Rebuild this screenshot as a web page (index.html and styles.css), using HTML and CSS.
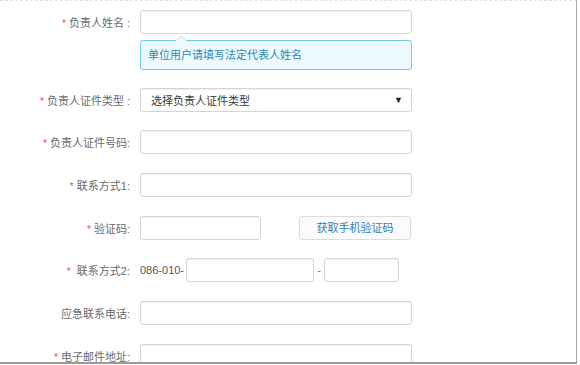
FILE: index.html
```html
<!doctype html>
<html lang="zh-CN">
<head>
	<meta charset="UTF-8" />
	<title>负责人信息</title>
	<link rel="stylesheet" href="styles.css">
</head>
<body>
	<section class="page">
		<form class="form">
			<div class="group">
				<div class="row">
					<label class="label"><i>*</i> 负责人姓名 :</label>
					<input class="ipt" type="text" />
				</div>
				<div class="tip">单位用户请填写法定代表人姓名</div>
			</div>
			<div class="row">
				<label class="label"><i>*</i> 负责人证件类型 :</label>
				<div class="select"><span>选择负责人证件类型</span><b>▼</b></div>
			</div>
			<div class="row">
				<label class="label"><i>*</i> 负责人证件号码:</label>
				<input class="ipt" type="text" />
			</div>
			<div class="row">
				<label class="label"><i>*</i> 联系方式1:</label>
				<input class="ipt" type="text" />
			</div>
			<div class="row">
				<label class="label"><i>*</i> 验证码:</label>
				<input class="ipt ipt-code" type="text" />
				<a href="javascript:;" class="btn">获取手机验证码</a>
			</div>
			<div class="row">
				<label class="label"><i>*</i> &nbsp;联系方式2:</label>
				<span class="pre">086-010-</span>
				<input class="ipt ipt-tel" type="text" />
				<span class="dash">-</span>
				<input class="ipt ipt-ext" type="text" />
			</div>
			<div class="row">
				<label class="label">应急联系电话:</label>
				<input class="ipt" type="text" />
			</div>
			<div class="row">
				<label class="label"><i>*</i> 电子邮件地址:</label>
				<input class="ipt" type="text" />
			</div>
		</form>
	</section>
</body>
</html>
```
FILE: styles.css
```css
body{
	margin: 0;
	font-family: "Liberation Sans", "Noto Sans CJK SC", sans-serif;
	font-size: 11px;
	color: #666;
	background: #fff;
}
.page{
	width: 576px;
	height: 361px;
	border-top: 1px dashed #e2e2e2;
	border-right: 1px solid #a6a6a6;
	border-bottom: 2px solid #9a9a9a;
	overflow: hidden;
}
.form{
	padding-top: 9px;
	display: flex;
	flex-direction: column;
	gap: 18.67px;
}
.group{
	margin-bottom: -1px;
}
.row{
	display: flex;
	align-items: center;
	height: 24px;
}
.label{
	width: 130px;
	margin-right: 10px;
	text-align: right;
	white-space: nowrap;
	color: #6a6a6a;
}
.label i{
	font-style: normal;
	color: #e2506a;
	font-size: 10px;
}
.ipt{
	box-sizing: border-box;
	width: 272px;
	height: 24px;
	margin: 0;
	padding: 0 8px;
	border: 1px solid #d4d4d4;
	border-radius: 3px;
	box-shadow: inset 0 1px 1px rgba(0,0,0,.06);
	font: inherit;
	outline: none;
}
.ipt-code{
	width: 121px;
}
.ipt-tel{
	width: 128px;
}
.ipt-ext{
	width: 75px;
}
.pre{
	width: 46px;
	color: #555;
}
.dash{
	width: 10px;
	text-align: center;
	color: #777;
}
.btn{
	box-sizing: border-box;
	width: 112px;
	height: 24px;
	margin-left: 38px;
	line-height: 22px;
	text-align: center;
	border: 1px solid #dcdcdc;
	border-radius: 3px;
	background: #fbfbfb;
	color: #2f7fb6;
	text-decoration: none;
}
.select{
	box-sizing: border-box;
	width: 272px;
	height: 24px;
	padding: 0 8px 0 10px;
	display: flex;
	align-items: center;
	justify-content: space-between;
	border: 1px solid #d4d4d4;
	border-radius: 3px;
	box-shadow: inset 0 1px 1px rgba(0,0,0,.06);
	color: #3a3a3a;
}
.select b{
	font-weight: normal;
	font-size: 9px;
	color: #222;
}
.tip{
	position: relative;
	box-sizing: border-box;
	width: 272px;
	height: 30px;
	margin: 6px 0 0 140px;
	padding-left: 7px;
	line-height: 28px;
	border: 1px solid #6ccbe6;
	border-radius: 3px;
	background: #ecf9fd;
	color: #2f86b8;
}
.tip:before,
.tip:after{
	content: "";
	position: absolute;
	left: 34px;
	top: -6px;
	border: 6px solid transparent;
	border-top: 0;
	border-bottom-color: #d6ebf1;
}
.tip:after{
	left: 35px;
	top: -4px;
	border-width: 0 5px 5px;
	border-bottom-color: #f4fbfd;
}
```
